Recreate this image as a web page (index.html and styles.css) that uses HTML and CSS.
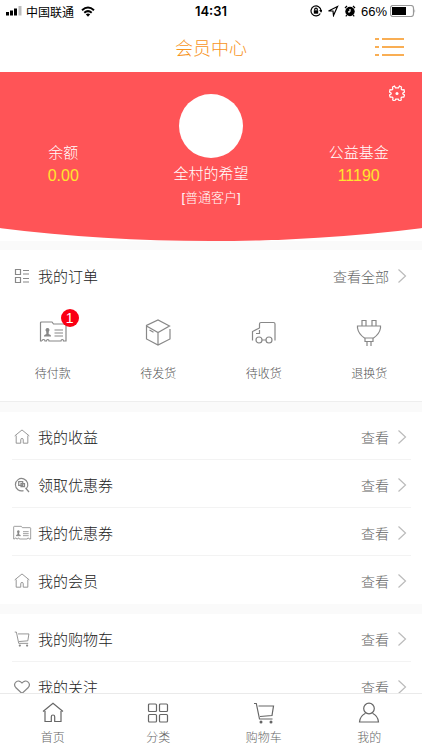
FILE: index.html
```html
<!DOCTYPE html>
<html lang="zh-CN">
<head>
<meta charset="utf-8">
<meta name="viewport" content="width=device-width, initial-scale=1">
<title>会员中心</title>
<link rel="stylesheet" href="styles.css">
</head>
<body>
<svg class="sprite" aria-hidden="true">
  <symbol id="home" viewBox="0 0 22 22"><path d="M1 9.500 11 1.300l10 8.200M3 9v10.500h6.300v-4.800q0-1.700 1.700-1.700t1.700 1.700v4.800H19V9"/></symbol>
  <symbol id="card" viewBox="0 0 28 24"><path d="M3 21H1.500V3q0-1 1-1H13l1.500 2H26q1 0 1 1v16h-2.500q0-1.500-1.200-1.500T22 21H10q0-1.500-1.200-1.500T7.500 21H6q0-1.500-1.500-1.500T3 21M15.500 10H24M15.500 13H24M15.500 16H24M5 16h7M8.500 13v2"/><path class="solid" d="M8.500 8a2 2 0 0 1 1.300 3.500L9.600 14l2 1v1H5.400v-1l2-1-.2-2.500A2 2 0 0 1 8.500 8Z"/></symbol>
  <symbol id="chevron" viewBox="0 0 10 16"><path d="m1.500 1.500 7 6.500-7 6.500"/></symbol>
  <symbol id="cart" viewBox="0 0 22 22"><path d="M1 1.500h2.300L6.500 17h13M5.500 4H20.500l-1.500 9.500-12 1"/><circle class="solid" cx="8" cy="20" r="1.500"/><circle class="solid" cx="18" cy="20" r="1.500"/></symbol>
</svg>

<div class="status">
  <div class="status-left">
    <svg class="signal" viewBox="0 0 17 10"><path d="M0 6h3v3.500H0zM4 4.500h3v5H4zM8 2.500h3v7H8z"/><path class="faint" d="M12.500 0h3v9.500h-3z"/></svg>
    <span>中国联通</span>
    <svg class="wifi" viewBox="0 0 14 11"><path d="M1 4.200q6-5.400 12 0M3.300 6.700q3.700-3.200 7.400 0"/><path class="tip" d="M4.800 8.300q2.200-1.600 4.400 0L7 10.700z"/></svg>
  </div>
  <strong class="time">14:31</strong>
  <div class="status-right">
    <svg class="status-icon" viewBox="0 0 12 12"><path d="M10.300 8.500A5 5 0 1 1 11 5.500M9.700 5l1.300 1.700L12 5M4.700 5.500v-1q0-1.300 1.300-1.300t1.300 1.300v1"/><path class="fill" d="M3.800 5.300h4.400v3.400H3.800z"/></svg>
    <svg class="status-icon" viewBox="0 0 12 12"><path d="M1.500 6 10.500 1.500 6.500 10.500 6 6Z"/></svg>
    <svg class="status-icon" viewBox="0 0 12 12"><circle class="fill" cx="6" cy="6.500" r="4.700"/><path d="m1 3 2-2M9 1l2 2M2.800 10l-1 1.300M9.200 10l1 1.300"/><path class="hand" d="M6 6.800V4M6 6.800H4"/></svg>
    <span class="percent">66%</span>
    <svg class="battery" viewBox="0 0 26 12"><rect class="case" x=".5" y=".5" width="23" height="11" rx="2.500"/><path d="M2 2h14v8H2z"/><path class="cap" d="M24.500 4q1.500 2 0 4z"/></svg>
  </div>
</div>

<header class="header">
  <h1>会员中心</h1>
  <button class="menu" aria-label="菜单"><svg viewBox="0 0 30 20"><path d="M1 2h4M8 2h22M1 10h4M8 10h22M1 18h4M8 18h22"/></svg></button>
</header>

<main>
  <section class="hero">
    <div class="stat"><span>余额</span><span class="amount">0.00</span></div>
    <div class="profile">
      <div class="avatar"></div>
      <h2>全村的希望</h2>
      <p>[普通客户]</p>
    </div>
    <div class="stat"><span>公益基金</span><span class="amount">11190</span></div>
    <button class="settings" aria-label="设置"><svg viewBox="0 0 16 16"><path d="M5.500 1 6.500 2.800h3L10.500 1l2 1-.3 2 .8.900 2-.2.500 2.300-1.700 1v1l1.700 1-.7 2.200-2-.1-.8.900.3 2-2 1-1-1.800h-2.600l-1 1.800-2-1 .3-2-.8-.9-2 .1L.500 10l1.700-1V8L.500 7 1 4.700l2 .2.800-.9-.3-2Z"/><circle class="solid" cx="8" cy="8.500" r="1.500"/></svg></button>
  </section>

  <section class="panel orders">
    <a class="row" href="#">
      <svg class="icon" viewBox="0 0 16 16"><path d="M1.500 1.500h5v5h-5zM1.500 9.500h5v5h-5zM9 2.500h6M9 6h6M9 10.500h6M9 14h6"/></svg>
      <span class="label">我的订单</span><span class="more">查看全部</span><svg class="chevron"><use href="#chevron"/></svg>
    </a>
    <nav class="states">
      <a href="#"><span class="state-icon"><svg><use href="#card"/></svg><b class="badge">1</b></span>待付款</a>
      <a href="#"><span class="state-icon"><svg viewBox="0 0 28 28"><path d="M26 11v10L14 27 2.500 21V7.500L14 2l11.500 6L14 14.500 2.500 8M14 14.500V27M5.500 12l4 2.200"/></svg></span>待发货</a>
      <a href="#"><span class="state-icon"><svg viewBox="0 0 28 28"><path d="M2.500 22.500V13.500l7-3.500V6q0-1.500 1.500-1.500H23.500q1.500 0 1.500 1.500v16.500M9.500 12v3.500H6M12 22h4"/><circle cx="9" cy="22" r="3"/><circle cx="19" cy="22" r="3"/></svg></span>待收货</a>
      <a href="#"><span class="state-icon"><svg viewBox="0 0 28 28"><path d="M7 8V2.500h4V8M17 8V2.500h4V8M2.500 8h23v2q-1 6-7 10h-9q-6-4-7-10ZM10 20v3.500h8V20M12 23.500V28M16 23.500V28"/></svg></span>退换货</a>
    </nav>
  </section>

  <section class="panel">
    <a class="row" href="#"><svg class="icon"><use href="#home"/></svg><span class="label">我的收益</span><span class="more">查看</span><svg class="chevron"><use href="#chevron"/></svg></a>
    <a class="row" href="#"><svg class="icon" viewBox="0 0 16 16"><path d="M9.500 13.600A6.200 6.200 0 1 1 12.500 11.500M11.500 11l3.500 4M4.700 4.700h4v3.600h-4zM7 6.700h3.500v3H7z"/></svg><span class="label">领取优惠券</span><span class="more">查看</span><svg class="chevron"><use href="#chevron"/></svg></a>
    <a class="row" href="#"><svg class="icon"><use href="#card"/></svg><span class="label">我的优惠券</span><span class="more">查看</span><svg class="chevron"><use href="#chevron"/></svg></a>
    <a class="row" href="#"><svg class="icon"><use href="#home"/></svg><span class="label">我的会员</span><span class="more">查看</span><svg class="chevron"><use href="#chevron"/></svg></a>
  </section>

  <section class="panel">
    <a class="row" href="#"><svg class="icon"><use href="#cart"/></svg><span class="label">我的购物车</span><span class="more">查看</span><svg class="chevron"><use href="#chevron"/></svg></a>
    <a class="row" href="#"><svg class="icon" viewBox="0 0 16 16"><path d="M8 14.500 1.700 8.500C-1.500 4.500 4-1 8 4c4-5 9.500.5 6.300 4.500Z"/></svg><span class="label">我的关注</span><span class="more">查看</span><svg class="chevron"><use href="#chevron"/></svg></a>
  </section>
</main>

<nav class="tabs">
  <a href="#"><svg><use href="#home"/></svg>首页</a>
  <a href="#"><svg viewBox="0 0 22 22"><rect x="1.500" y="2" width="8" height="7.500" rx="1"/><rect x="12.500" y="2" width="8" height="7.500" rx="1"/><rect x="1.500" y="12.500" width="8" height="7.500" rx="1"/><rect x="12.500" y="12.500" width="8" height="7.500" rx="1"/></svg>分类</a>
  <a href="#"><svg><use href="#cart"/></svg>购物车</a>
  <a href="#"><svg viewBox="0 0 22 22"><circle cx="11" cy="6.500" r="5.300"/><path d="M7.500 11.300Q2 14 1.500 20h19q-.5-6-6-8.700"/></svg>我的</a>
</nav>
</body>
</html>
```
FILE: styles.css
```css
* { box-sizing: border-box; }

body {
  margin: 0;
  padding-bottom: 57px;
  background: #fafafa;
  color: #222;
  font-family: "Liberation Sans", "Noto Sans CJK SC", sans-serif;
  font-weight: 300;
  font-size: 15px;
}

html { scrollbar-width: none; }

h1, h2, p { margin: 0; font-weight: inherit; }
a { color: inherit; text-decoration: none; }
button { padding: 0; border: 0; background: none; }
svg { display: block; fill: none; stroke: currentColor; stroke-width: 1.2; }
.sprite { position: absolute; width: 0; height: 0; }
.solid { fill: currentColor; stroke: none; }

.status {
  display: grid;
  grid-template-columns: 1fr auto 1fr;
  align-items: center;
  height: 22px;
  padding: 0 6px;
  background: #fff;
  color: #000;
  font-size: 12px;
  font-weight: 400;
}
.status-left, .status-right { display: flex; align-items: center; }
.status-left { gap: 3px; }
.status-right { justify-content: flex-end; gap: 5px; }
.time { font-family: Inter, sans-serif; font-size: 13px; font-weight: 600; }
.signal { width: 17px; height: 10px; fill: #000; stroke: none; }
.signal .faint { fill: #bbb; }
.wifi { width: 14px; height: 11px; margin-left: 4px; stroke-width: 2; }
.wifi .tip { fill: #000; stroke: none; }
.status-icon { width: 12px; height: 12px; stroke-width: 1.2; }
.status-icon .fill { fill: #000; stroke: none; }
.status-icon .hand { stroke: #fff; }
.percent { font-family: "Liberation Sans", sans-serif; font-size: 13px; }
.battery { width: 26px; height: 12px; margin-left: -2px; fill: #000; stroke: none; }
.battery .case { fill: none; stroke: #999; }
.battery .cap { fill: #999; }

.header {
  display: grid;
  grid-template-columns: 1fr auto 1fr;
  align-items: center;
  height: 50px;
  padding: 0 18px;
  background: #fff;
  color: #f7941d;
}
.header h1 { grid-column: 2; font-size: 18px; }
.menu { justify-self: end; color: inherit; }
.menu svg { width: 30px; height: 20px; stroke-width: 1.4; }

main { display: grid; gap: 10px; }

.hero {
  position: relative;
  display: grid;
  grid-template-columns: 3fr 4fr 3fr;
  height: 169px;
  margin-bottom: -1px;
  color: #fff;
  text-align: center;
  isolation: isolate;
  background: #fff;
}
.hero::before {
  content: "";
  position: absolute;
  inset: 0;
  z-index: -1;
  background: #ff5457;
  clip-path: ellipse(130% 100% at 50% 0);
}
.stat { display: flex; flex-direction: column; padding-top: 69px; line-height: 23px; }
.amount { color: #ffe52e; font-size: 16px; }
.profile { padding-top: 22px; }
.avatar { width: 64px; height: 64px; margin: 0 auto 4px; border-radius: 50%; background: #fff; }
.profile h2 { font-size: 15px; line-height: 24px; }
.profile p { font-size: 13px; line-height: 24px; }
.settings { position: absolute; top: 13px; right: 17px; color: #fff; }
.settings svg { width: 16px; height: 16px; }

.panel { background: #fff; }
.row {
  display: flex;
  align-items: center;
  height: 48px;
  margin: 0 11px 0 12px;
  padding: 2px 4px 0 0;
  border-bottom: 1px solid #f3f3f3;
}
.row:last-child, .orders .row { border-bottom-color: transparent; }
.icon { width: 20px; height: 16px; margin-right: 6px; color: #888; }
.label { flex: 1; }
.more { margin-right: 8px; color: #666; font-size: 14px; }
.chevron { width: 10px; height: 16px; color: #bbb; }

.orders { height: 152px; padding-top: 1px; border-bottom: 1px solid #eee; }
.states, .tabs { display: grid; grid-template-columns: repeat(4, 1fr); }
.states a, .tabs a { display: flex; flex-direction: column; align-items: center; font-size: 12px; }
.states { padding-top: 19px; color: #555; }
.states a { gap: 18px; line-height: 20px; }
.state-icon { position: relative; color: #888; }
.state-icon svg { width: 28px; height: 28px; }
.badge {
  position: absolute;
  top: -9px;
  right: -12px;
  width: 18px;
  border-radius: 50%;
  background: #fa0014;
  color: #fff;
  font-weight: 400;
  font-size: 14px;
  line-height: 18px;
  text-align: center;
}

.tabs {
  position: fixed;
  inset: auto 0 0;
  height: 57px;
  padding-top: 8px;
  border-top: 1px solid #eaeaea;
  background: #fff;
  color: #666;
}
.tabs a { gap: 5px; line-height: 18px; }
.tabs svg { width: 22px; height: 22px; }
```
